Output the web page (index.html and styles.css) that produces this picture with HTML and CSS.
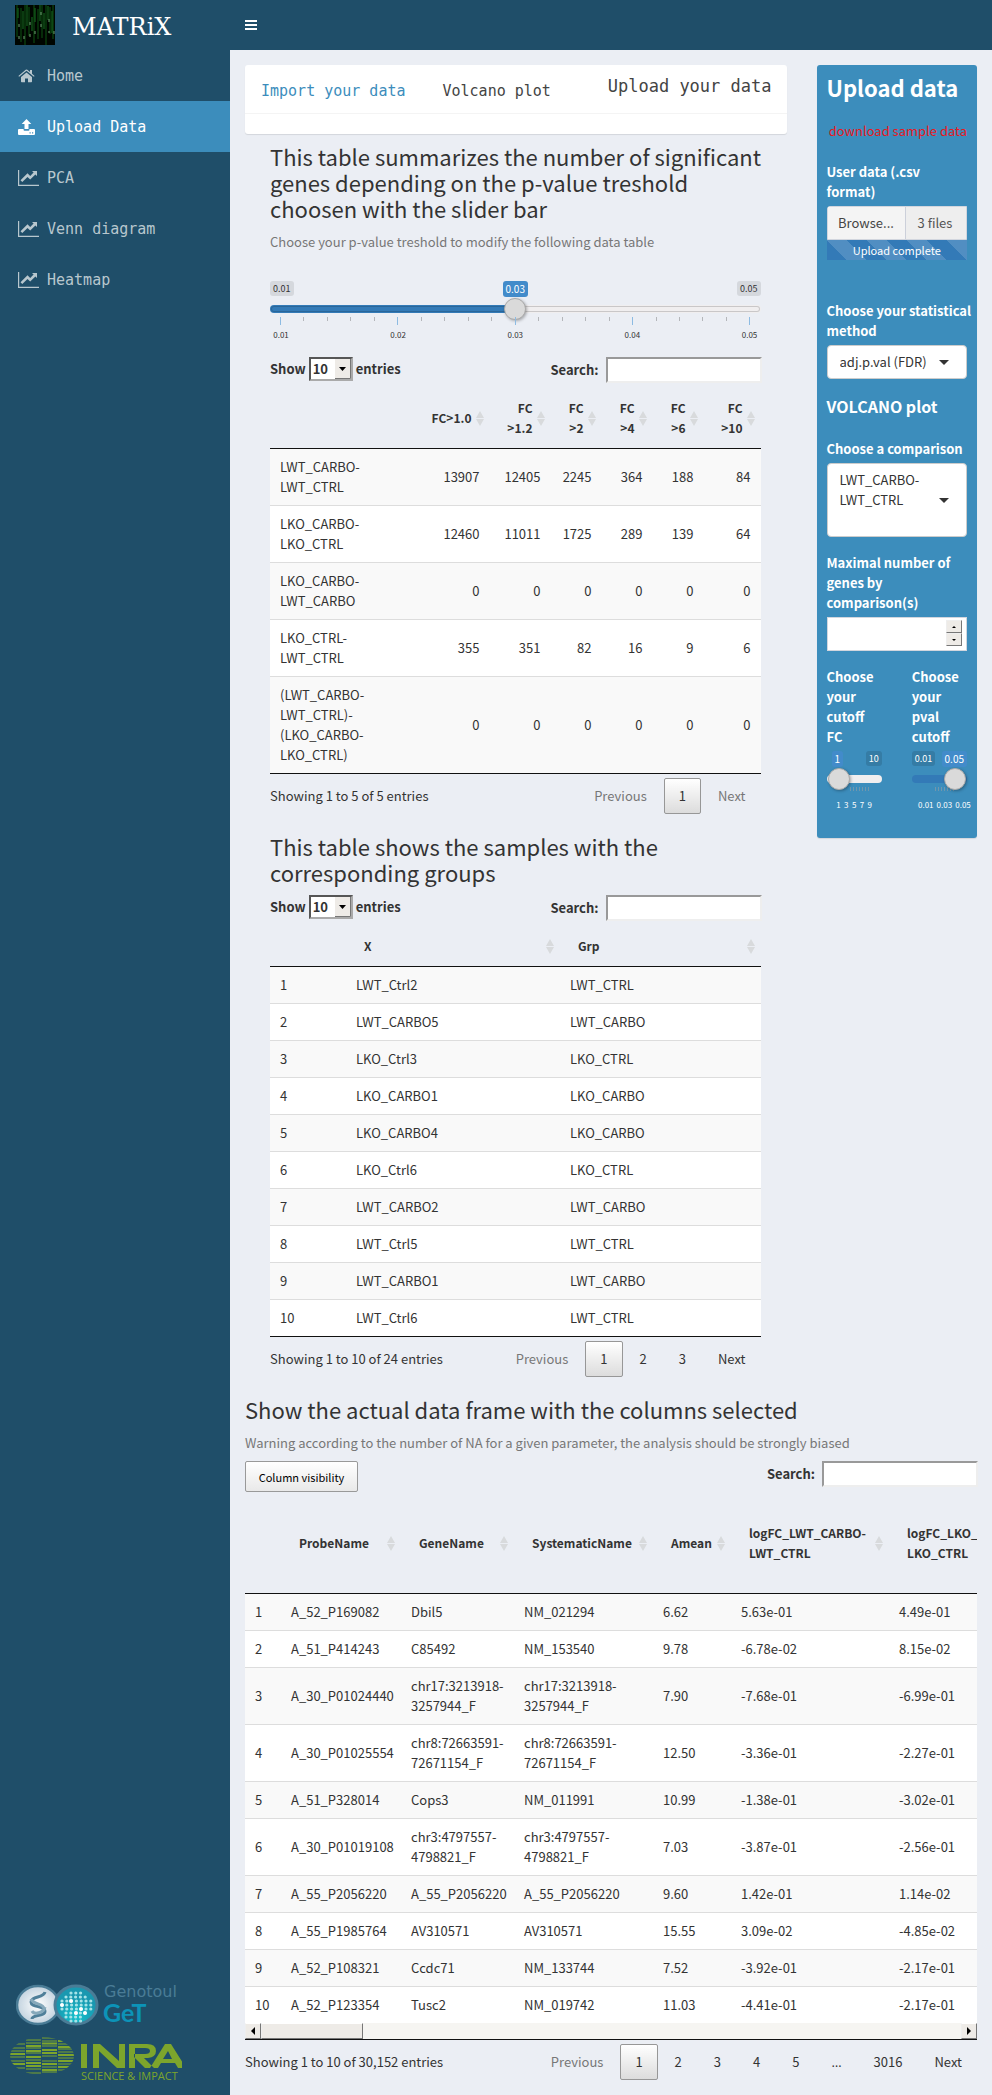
FILE: index.html
```html
<!DOCTYPE html>
<html lang="en">
<head>
<meta charset="utf-8">
<title>MATRiX</title>
<link rel="stylesheet" href="styles.css">
</head>
<body>
<svg width="0" height="0" class="defs" aria-hidden="true">
  <symbol id="i-home" viewBox="0 0 17 14"><path d="M8.500 3.400 14 8v4.600a.7.7 0 0 1-.7.700H10V9.500H7v3.800H3.700a.7.7 0 0 1-.7-.7V8z"/><path d="M12 1h2v3.700l2.600 2.200-.7.900L8.500 1.700 1.100 7.800l-.7-.9L7.700.8a1.300 1.300 0 0 1 1.600 0L12 3z"/></symbol>
  <symbol id="i-upload" viewBox="0 0 17 16"><path d="M8.500 0l4.800 5H10.500v5h-4V5H3.700z"/><path d="M1 10h4.600v1q0 .8.900.8h4q.9 0 .9-.8v-1H16q1 0 1 1v4q0 1-1 1H1q-1 0-1-1v-4q0-1 1-1zm10.500 3.300v1.200h1.200v-1.200zm2.500 0v1.200h1.200v-1.200z" fill-rule="evenodd"/></symbol>
  <symbol id="i-chart" viewBox="0 0 21 16"><path d="M0 0h1.200v14.800H21V16H0z"/><path d="M14 1h5v5l-1.600-1.600-5.200 5.200-2.700-2.700-5.200 5.200-1.800-1.800 7-7 2.700 2.700 3.400-3.400z"/></symbol>
</svg>
<aside class="sidebar">
  <div class="brand">
    <svg class="brand-logo" viewBox="0 0 40 40" aria-hidden="true">
      <rect width="40" height="40" fill="#000500"/>
      <g fill="none" stroke-width="1.300">
        <path stroke="#0a420e" d="M2 0v32M6 3v34M10 0v40M14 2v29M19 0v38M23 4v30M27 0v33M31 0v40M35 2v27M38 0v34"/>
        <path stroke="#125a1a" d="M3 3v10M8 6v18M12 0v21M17 12v14M20 3v14M25 0v16M29 8v16M33 1v14M37 6v22"/>
        <path stroke="#6f9f74" stroke-width="1" stroke-dasharray="3 9" d="M4 19v18M9 31v8M15 17v16M20 26v12M26 7v22M34 14v14M39 26v12"/>
      </g>
    </svg>
    <span class="brand-name">MATRiX</span>
  </div>
  <nav class="menu">
    <a href="#home"><svg width="17" height="14"><use href="#i-home"/></svg>Home</a>
    <a href="#upload" class="active"><svg width="17" height="16"><use href="#i-upload"/></svg>Upload Data</a>
    <a href="#pca"><svg width="21" height="16"><use href="#i-chart"/></svg>PCA</a>
    <a href="#venn"><svg width="21" height="16"><use href="#i-chart"/></svg>Venn diagram</a>
    <a href="#heatmap"><svg width="21" height="16"><use href="#i-chart"/></svg>Heatmap</a>
  </nav>
  <div class="partners">
    <svg class="genotoul" width="180" height="46" viewBox="0 0 180 46" role="img" aria-label="Genotoul GeT">
      <defs>
        <radialGradient id="gw"><stop offset="0" stop-color="#fff"/><stop offset="1" stop-color="#c3d3df"/></radialGradient>
        <radialGradient id="gt" cy=".8"><stop offset="0" stop-color="#12c0cc"/><stop offset="1" stop-color="#1a98b0"/></radialGradient>
      </defs>
      <ellipse cx="22" cy="21" rx="21" ry="19" fill="url(#gw)" stroke="#4a7c96" stroke-width="2.500"/>
      <ellipse cx="60" cy="21" rx="21" ry="19" fill="url(#gt)" stroke="#4a7c96" stroke-width="3"/>
      <g fill="none" stroke="#4f7f99" stroke-width="3"><path d="M29 8C28 14 15 12 15 18s14 3 14 9-13 3-13 8"/><path stroke="#86a9bb" d="M15 15c2 6 13 4 13 10M16 27c2 4 12 2 13-4"/></g>
      <g stroke="#a6e3e8" stroke-width="3.200" stroke-linecap="round" stroke-dasharray="0 4.800"><path d="M55 9h11M50 13h20M46 17h30M46 21h30M46 25h30M50 29h22M50 33h19M55 37h11"/></g>
      <g fill="#fff"><circle cx="55" cy="17" r="2"/><circle cx="46" cy="21" r="2"/><circle cx="65" cy="25" r="2"/><circle cx="60" cy="29" r="2"/><circle cx="69" cy="29" r="2"/></g>
      <text x="88" y="13" class="geno">Genotoul</text>
      <text x="87" y="38" class="get">GeT</text>
    </svg>
    <svg class="inra" width="172" height="48" viewBox="0 0 172 48" role="img" aria-label="INRA Science &amp; Impact">
      <defs><clipPath id="globe"><ellipse cx="32" cy="20" rx="32" ry="19"/></clipPath></defs>
      <g clip-path="url(#globe)" stroke="#7da52c" fill="none">
        <path stroke-width="1" d="M0 8h15M0 12h15M0 15h15M0 21h15M0 25h15M0 32h15M16 4h15M16 7h15M16 12h15M16 17h15M16 24h15M16 33h15M16 37h15M32 2h15M32 5h15M32 10h15M32 20h15M32 25h15M32 31h15M32 36h15M48 8h16M48 13h16M48 16h16M48 22h16M48 28h16M48 34h16"/>
        <path stroke-width="2" d="M0 18h15M0 28h15M16 10h15M16 15h15M16 21h15M16 27h15M16 30h15M32 7.500h15M32 14h15M32 17h15M32 28h15M32 34h15M48 5h16M48 11h16M48 19h16M48 25h16M48 31h16"/>
      </g>
      <g fill="#7da52c"><path d="M71 8h6v24h-6zM83 32V8h7l19 17V8h6v24h-8L89 15v17z"/><path fill-rule="evenodd" d="M119 32V8h18q9 0 9 7 0 6-8 7h-4l10 10h-9l-11-11v-3h11q5 0 5-3t-5-3h-10v20zM140 32 155 8h6l15 24h-8l-3-5h-14l-3 5zm13-9h9l-4-8z"/></g>
      <text x="71" y="44" class="science">SCIENCE &amp; IMPACT</text>
    </svg>
  </div>
</aside>

<div class="page">
  <header class="topbar"><button type="button" class="burger" aria-label="Toggle navigation"><svg width="12" height="10" viewBox="0 0 12 10"><path fill="#fff" d="M0 0h12v2H0zM0 4h12v2H0zM0 8h12v2H0z"/></svg></button></header>
  <main class="content">
    <div class="columns">
      <div class="col">
        <div class="tabbox">
          <div class="tabs">
            <a href="#import" class="on">Import your data</a>
            <a href="#volcano">Volcano plot</a>
            <span class="tabs-title">Upload your data</span>
          </div>
        </div>
        <section class="inner">
          <h3>This table summarizes the number of significant genes depending on the p-value treshold choosen with the slider bar</h3>
          <p class="help">Choose your p-value treshold to modify the following data table</p>
          <div class="slider">
            <div class="slider-labels"><span class="lim">0.01</span><span class="val">0.03</span><span class="lim">0.05</span></div>
            <input type="range" class="range half" aria-label="p-value treshold" min="0.01" max="0.05" step="0.001" value="0.03">
            <div class="ticks"><i class="big"></i><i></i><i></i><i></i><i></i><i class="big"></i><i></i><i></i><i></i><i></i><i class="big"></i><i></i><i></i><i></i><i></i><i class="big"></i><i></i><i></i><i></i><i></i><i class="big"></i></div>
            <div class="tick-text"><span>0.01</span><span>0.02</span><span>0.03</span><span>0.04</span><span>0.05</span></div>
          </div>
          <div class="controls">
            <label class="length">Show <select><option>10</option><option>25</option></select> entries</label>
            <label class="search">Search: <input type="search"></label>
          </div>
          <table class="t1">
            <colgroup><col><col class="w76"><col class="w61"><col class="w51"><col class="w51"><col class="w51"><col class="w57"></colgroup>
            <thead><tr><td></td><th>FC&gt;1.0</th><th>FC<br>&gt;1.2</th><th>FC<br>&gt;2</th><th>FC<br>&gt;4</th><th>FC<br>&gt;6</th><th>FC<br>&gt;10</th></tr></thead>
            <tbody>
              <tr><td>LWT_CARBO-<wbr>LWT_CTRL</td><td>13907</td><td>12405</td><td>2245</td><td>364</td><td>188</td><td>84</td></tr>
              <tr><td>LKO_CARBO-<wbr>LKO_CTRL</td><td>12460</td><td>11011</td><td>1725</td><td>289</td><td>139</td><td>64</td></tr>
              <tr><td>LKO_CARBO-<wbr>LWT_CARBO</td><td>0</td><td>0</td><td>0</td><td>0</td><td>0</td><td>0</td></tr>
              <tr><td>LKO_CTRL-<wbr>LWT_CTRL</td><td>355</td><td>351</td><td>82</td><td>16</td><td>9</td><td>6</td></tr>
              <tr><td>(LWT_CARBO-<wbr>LWT_CTRL)-<wbr>(LKO_CARBO-<wbr>LKO_CTRL)</td><td>0</td><td>0</td><td>0</td><td>0</td><td>0</td><td>0</td></tr>
            </tbody>
          </table>
          <div class="foot"><span>Showing 1 to 5 of 5 entries</span>
            <div class="pager"><button type="button" disabled>Previous</button><button type="button" class="cur">1</button><button type="button" disabled>Next</button></div></div>

          <h3>This table shows the samples with the corresponding groups</h3>
          <div class="controls">
            <label class="length">Show <select><option>10</option><option>25</option></select> entries</label>
            <label class="search">Search: <input type="search"></label>
          </div>
          <table class="t2">
            <colgroup><col class="w76"><col class="w214"><col></colgroup>
            <thead><tr><td></td><th>X</th><th>Grp</th></tr></thead>
            <tbody>
              <tr><td>1</td><td>LWT_Ctrl2</td><td>LWT_CTRL</td></tr>
              <tr><td>2</td><td>LWT_CARBO5</td><td>LWT_CARBO</td></tr>
              <tr><td>3</td><td>LKO_Ctrl3</td><td>LKO_CTRL</td></tr>
              <tr><td>4</td><td>LKO_CARBO1</td><td>LKO_CARBO</td></tr>
              <tr><td>5</td><td>LKO_CARBO4</td><td>LKO_CARBO</td></tr>
              <tr><td>6</td><td>LKO_Ctrl6</td><td>LKO_CTRL</td></tr>
              <tr><td>7</td><td>LWT_CARBO2</td><td>LWT_CARBO</td></tr>
              <tr><td>8</td><td>LWT_Ctrl5</td><td>LWT_CTRL</td></tr>
              <tr><td>9</td><td>LWT_CARBO1</td><td>LWT_CARBO</td></tr>
              <tr><td>10</td><td>LWT_Ctrl6</td><td>LWT_CTRL</td></tr>
            </tbody>
          </table>
          <div class="foot"><span>Showing 1 to 10 of 24 entries</span>
            <div class="pager"><button type="button" disabled>Previous</button><button type="button" class="cur">1</button><button type="button">2</button><button type="button">3</button><button type="button">Next</button></div></div>
        </section>
      </div>

      <div class="col">
        <form class="panel">
          <h2>Upload data</h2>
          <a href="#sample" class="sample">download sample data</a>
          <div class="field">
            <label for="file">User data (.csv format)</label>
            <div class="file"><button type="button" id="file">Browse...</button><span>3 files</span></div>
            <div class="progress">Upload complete</div>
          </div>
          <div class="field method">
            <label for="method">Choose your statistical method</label>
            <select id="method" class="pick"><option>adj.p.val (FDR)</option><option>p.val (raw)</option></select>
          </div>
          <h4>VOLCANO plot</h4>
          <div class="field">
            <label for="comp">Choose a comparison</label>
            <select id="comp" class="pick tall"><option>LWT_CARBO-LWT_CTRL</option></select>
          </div>
          <div class="field">
            <label for="maxg">Maximal number of genes by comparison(s)</label>
            <div class="number"><input type="number" id="maxg"><span class="spin"><button type="button" aria-label="Increase"><svg width="4" height="2" viewBox="0 0 4 2"><path d="M2 0l2 2H0z"/></svg></button><button type="button" aria-label="Decrease"><svg width="4" height="2" viewBox="0 0 4 2"><path d="M0 0h4L2 2z"/></svg></button></span></div>
          </div>
          <div class="cutoffs">
            <div class="field">
              <label for="fc">Choose your cutoff FC</label>
              <div class="slider mini">
                <div class="slider-labels"><span class="val first">1</span><span class="lim">10</span></div>
                <input type="range" id="fc" class="range none" min="1" max="10" value="1">
                <div class="ticks"></div>
                <div class="tick-text"><span>1</span><span>3</span><span>5</span><span>7</span><span>9</span></div>
              </div>
            </div>
            <div class="field">
              <label for="pv">Choose your pval cutoff</label>
              <div class="slider mini">
                <div class="slider-labels"><span class="lim">0.01</span><span class="val">0.05</span></div>
                <input type="range" id="pv" class="range full" min="0.01" max="0.05" step="0.01" value="0.05">
                <div class="ticks"></div>
                <div class="tick-text wide"><span>0.01</span><span>0.03</span><span>0.05</span></div>
              </div>
            </div>
          </div>
        </form>
      </div>
    </div>

    <h3>Show the actual data frame with the columns selected</h3>
    <p class="help">Warning according to the number of NA for a given parameter, the analysis should be strongly biased</p>
    <div class="controls frame-controls">
      <button type="button" class="colvis">Column visibility</button>
      <label class="search">Search: <input type="search"></label>
    </div>
    <div class="scroller">
      <table class="t3">
        <colgroup><col class="w36"><col class="w120"><col class="w113"><col class="w139"><col class="w78"><col class="w158"><col class="w158"></colgroup>
        <thead><tr><td></td><th>ProbeName</th><th>GeneName</th><th>SystematicName</th><th>Amean</th><th>logFC_LWT_CARBO-<br>LWT_CTRL</th><th>logFC_LKO_CARBO-<br>LKO_CTRL</th></tr></thead>
        <tbody>
          <tr><td>1</td><td>A_52_P169082</td><td>Dbil5</td><td>NM_021294</td><td>6.62</td><td>5.63e-01</td><td>4.49e-01</td></tr>
          <tr><td>2</td><td>A_51_P414243</td><td>C85492</td><td>NM_153540</td><td>9.78</td><td>-6.78e-02</td><td>8.15e-02</td></tr>
          <tr><td>3</td><td>A_30_P01024440</td><td>chr17:3213918-<wbr>3257944_F</td><td>chr17:3213918-<wbr>3257944_F</td><td>7.90</td><td>-7.68e-01</td><td>-6.99e-01</td></tr>
          <tr><td>4</td><td>A_30_P01025554</td><td>chr8:72663591-<wbr>72671154_F</td><td>chr8:72663591-<wbr>72671154_F</td><td>12.50</td><td>-3.36e-01</td><td>-2.27e-01</td></tr>
          <tr><td>5</td><td>A_51_P328014</td><td>Cops3</td><td>NM_011991</td><td>10.99</td><td>-1.38e-01</td><td>-3.02e-01</td></tr>
          <tr><td>6</td><td>A_30_P01019108</td><td>chr3:4797557-<wbr>4798821_F</td><td>chr3:4797557-<wbr>4798821_F</td><td>7.03</td><td>-3.87e-01</td><td>-2.56e-01</td></tr>
          <tr><td>7</td><td>A_55_P2056220</td><td>A_55_P2056220</td><td>A_55_P2056220</td><td>9.60</td><td>1.42e-01</td><td>1.14e-02</td></tr>
          <tr><td>8</td><td>A_55_P1985764</td><td>AV310571</td><td>AV310571</td><td>15.55</td><td>3.09e-02</td><td>-4.85e-02</td></tr>
          <tr><td>9</td><td>A_52_P108321</td><td>Ccdc71</td><td>NM_133744</td><td>7.52</td><td>-3.92e-01</td><td>-2.17e-01</td></tr>
          <tr><td>10</td><td>A_52_P123354</td><td>Tusc2</td><td>NM_019742</td><td>11.03</td><td>-4.41e-01</td><td>-2.17e-01</td></tr>
        </tbody>
      </table>
    </div>
    <div class="hbar"><button type="button" aria-label="Scroll left"><svg width="4" height="8" viewBox="0 0 4 8"><path d="M4 0v8L0 4z"/></svg></button><span class="thumb"></span><button type="button" class="end" aria-label="Scroll right"><svg width="4" height="8" viewBox="0 0 4 8"><path d="M0 0v8l4-4z"/></svg></button></div>
    <div class="foot"><span>Showing 1 to 10 of 30,152 entries</span>
      <div class="pager"><button type="button" disabled>Previous</button><button type="button" class="cur">1</button><button type="button">2</button><button type="button">3</button><button type="button">4</button><button type="button">5</button><span class="dots">…</span><button type="button">3016</button><button type="button">Next</button></div></div>
  </main>
</div>
</body>
</html>
```
FILE: styles.css
```css
* { box-sizing: border-box; }
body {
  margin: 0;
  display: grid;
  grid-template-columns: 230px minmax(0, 1fr);
  min-height: 100vh;
  background: #ebeef4;
  color: #333;
  font: 13px/20px "Noto Sans CJK SC", "Open Sans", sans-serif;
}
.defs { position: absolute; }
a { text-decoration: none; }
button, input, select { font: inherit; color: inherit; }
button { cursor: pointer; }

/* Sidebar */
.sidebar { display: flex; flex-direction: column; background: #1f4e69; }
.brand { display: flex; align-items: center; gap: 17px; height: 50px; padding-left: 15px; }
.brand-logo { width: 40px; height: 40px; }
.brand-name { color: #fff; font: 24px/30px "DejaVu Serif", serif; padding-top: 3px; }
.menu a {
  display: flex; align-items: center; height: 51px; padding-left: 18px;
  color: #b8c7ce; font: 15px/20px "DejaVu Sans Mono", monospace;
}
.menu svg { fill: currentColor; margin-right: 8px; }
.menu svg[width="17"] { margin-right: 12px; }
.menu a.active { background: #3c8dbc; color: #fff; }
.partners { margin-top: auto; padding: 0 0 11px 10px; display: flex; flex-direction: column; gap: 6px; }
.genotoul { margin-left: 6px; }
.geno { font: 16px "DejaVu Sans", sans-serif; fill: #4a7c96; }
.get { font: bold 25px Lato, sans-serif; fill: #0c93b8; }
.science { font: 11px "Open Sans", sans-serif; fill: #7da52c; }

/* Top bar */
.topbar { height: 50px; background: #1f4e69; display: flex; align-items: center; padding-left: 15px; }
.burger { display: flex; border: 0; background: none; padding: 0; }
.content { padding: 15px; }
.columns { display: grid; grid-template-columns: 3fr 1fr; margin: 0 -15px; }
.col { padding: 0 15px; min-width: 0; }

/* Tabs */
.tabbox { background: #fff; border-radius: 3px; box-shadow: 0 1px 1px rgba(0, 0, 0, .1); padding-bottom: 20px; }
.tabs {
  display: flex; align-items: center; gap: 37px; height: 49px; padding: 4px 15px 0 16px;
  border-bottom: 1px solid #f4f4f4; font: 15px/20px "DejaVu Sans Mono", monospace;
}
.tabs a { color: #444; }
.tabs a.on { color: #3c8dbc; }
.tabs-title { margin: 0 0 10px auto; font-size: 17px; color: #444; white-space: nowrap; }
.inner { padding: 0 26px 0 25px; }

h3 { margin: 9px -10px 10px 0; font-size: 22px; line-height: 26px; font-weight: 400; }
.help { margin: 0; padding: 1px 0; color: #777; }

/* Sliders */
.slider { margin-top: 28px; height: 76px; }
.slider-labels { display: flex; justify-content: space-between; align-items: flex-start; height: 17px; font-size: 9px; line-height: 15px; }
.slider-labels span { padding: 0 3px; border-radius: 3px; }
.lim { background: #d5d8dd; }
.val { background: #428bca; color: #fff; font-size: 10px; line-height: 16px; }
.range { display: block; width: 100%; height: 22px; margin: 0; appearance: none; background: none; }
.range::-webkit-slider-runnable-track {
  height: 8px; border-radius: 8px; border: 1px solid #c8c8cc;
  background: #f0eeef;
}
.range::-webkit-slider-thumb {
  appearance: none; width: 22px; height: 22px; margin-top: -8px; border-radius: 50%;
  background: #dadada; border: 1px solid #aaa; box-shadow: 1px 1px 3px rgba(0, 0, 0, .3);
}
.range.half::-webkit-slider-runnable-track { background: linear-gradient(90deg, #337ab7 50%, #f0eeef 50%) border-box; border-color: transparent; box-shadow: inset 0 0 0 1px rgba(0, 0, 0, .16); }
.range.full::-webkit-slider-runnable-track { background: #337ab7; border-color: #337ab7; }
.ticks { display: flex; justify-content: space-between; height: 8px; margin-top: -3px; padding: 0 10px; }
.ticks i { width: 1px; height: 4px; background: #b4b6ba; }
.ticks .big { height: 8px; background: #8dbbe2; }
.tick-text { display: flex; justify-content: space-between; padding: 0 11px; font-size: 8px; line-height: 20px; }
.tick-text span { width: 0; display: flex; justify-content: center; }

/* Table controls */
.controls { display: flex; justify-content: space-between; align-items: flex-start; font-weight: 700; height: 31px; }
.length { display: flex; align-items: center; gap: 3px; height: 24px; }
.length select {
  width: 44px; height: 24px; padding: 0 0 0 2px; border: 2px inset #aaa; border-radius: 0; appearance: none; font-weight: 700;
  background: #fff url("data:image/svg+xml,%3Csvg xmlns='http://www.w3.org/2000/svg' width='16' height='20'%3E%3Cpath fill='%23eeebe7' d='M0 0h16v20H0z'/%3E%3Cpath fill='none' stroke='%23777' d='M0 19.500h15.500V0'/%3E%3Cpath d='M4 8h7l-3.500 4z'/%3E%3C/svg%3E") no-repeat right center;
}
.search { display: flex; align-items: center; gap: 7px; height: 26px; margin-right: -1px; }
.search input { width: 156px; height: 26px; border: 2px solid; border-color: #999 #eee #eee #999; background: #fff; padding: 1px; border-radius: 0; }

/* Tables */
table { width: 100%; table-layout: fixed; border-collapse: separate; border-spacing: 0; border-bottom: 1px solid #111; }
th, td { text-align: left; vertical-align: middle; }
td { padding: 8px 10px; border-top: 1px solid #ddd; }
tbody tr:first-child td { border-top: 0; }
tbody tr:nth-child(odd) { background: #f9f9f9; }
tbody tr:nth-child(even) { background: #fff; }
thead td, th { padding: 10px 18px; border: 0; border-bottom: 1px solid #111; }
th {
  font-size: 12px;
  white-space: nowrap;
  background: url("data:image/svg+xml,%3Csvg xmlns='http://www.w3.org/2000/svg' width='8' height='15'%3E%3Cpath fill='%23d8dadc' d='M4 0l4 7H0zM0 8h8l-4 7z'/%3E%3C/svg%3E") no-repeat right 6px center;
}
.t1 th { padding-left: 0; text-align: right; }
.t1 td:not(:first-child) { text-align: right; }
.t1 td:first-child { padding-right: 30px; }
.t3 { width: 802px; border-bottom: 0; }
.t3 th, .t3 thead td { padding-top: 30px; padding-bottom: 30px; }
.w36 { width: 36px; } .w51 { width: 51px; } .w57 { width: 57px; } .w61 { width: 61px; }
.w76 { width: 76px; } .w78 { width: 78px; } .w113 { width: 113px; } .w120 { width: 120px; }
.w139 { width: 139px; } .w158 { width: 158px; } .w214 { width: 214px; }

/* Footers and paging */
.foot { display: flex; justify-content: space-between; align-items: center; padding-top: 4px; margin-bottom: 19px; }
.foot:last-child { margin-bottom: 10px; }
.pager { display: flex; gap: 2px; }
.pager button, .pager span { min-width: 37px; height: 36px; padding: 0 14px; border: 1px solid transparent; background: none; border-radius: 2px; line-height: 34px; text-align: center; }
.pager .dots { font-family: "Open Sans", sans-serif; }
.pager button:disabled { color: #777; }
.pager .cur { border-color: #979797; background: linear-gradient(#fff, #dcdcdc); }

/* Side panel */
.panel { background: #3c8dbc; color: #fff; border-radius: 3px; padding: 10px 10px 20px; box-shadow: 0 1px 1px rgba(0, 0, 0, .1); }
.panel h2 { margin: 0 0 22px; font-size: 22px; line-height: 24px; white-space: nowrap; }
.sample { display: block; color: #e6191f; text-align: right; white-space: nowrap; margin-bottom: 21px; }
.field { margin-bottom: 16px; }
.field > label { display: block; font-weight: 700; margin-bottom: 4px; }
.method > label { margin-right: -8px; }
.file { display: flex; height: 34px; color: #555; border: 1px solid #d2d6de; border-radius: 3px 0 0 0; background: #eee; }
.file button { width: 78px; border: 0; border-right: 1px solid #ccd0da; background: #f4f4f4; color: #444; padding: 0; }
.file span { padding: 6px 12px; white-space: nowrap; }
.progress { height: 20px; font-size: 11px; text-align: center; background: #337ab7 linear-gradient(45deg, rgba(255, 255, 255, .15) 25%, transparent 25%, transparent 50%, rgba(255, 255, 255, .15) 50%, rgba(255, 255, 255, .15) 75%, transparent 75%) 0 0 / 40px 40px; }
.method { margin-top: 41px; margin-bottom: 17px; }
.pick {
  display: block; width: 100%; height: 34px; padding: 0 12px; border: 1px solid #ccc; border-radius: 4px; appearance: none; color: #333;
  background: #fff url("data:image/svg+xml,%3Csvg xmlns='http://www.w3.org/2000/svg' width='10' height='5'%3E%3Cpath fill='%23333' d='M0 0h10L5 5z'/%3E%3C/svg%3E") no-repeat right 17px center;
}
.pick.tall { height: 74px; white-space: normal; padding: 6px 40px 26px 12px; }
.panel h4 { margin: 0 0 23px; font-size: 16px; line-height: 20px; }
.number { display: flex; height: 34px; background: #fff; border: 1px solid #d2d6de; padding: 2px 4px; }
.number input { flex: 1; min-width: 0; border: 0; background: none; appearance: textfield; color: #555; outline: 0; }
.number input::-webkit-inner-spin-button { display: none; }
.spin { display: flex; flex-direction: column; width: 16px; }
.spin button { display: flex; align-items: center; justify-content: center; height: 13px; padding: 0; border: 1px solid; border-color: #eee #777 #777 #eee; background: #eeebe7; }
.cutoffs { display: grid; grid-template-columns: 1fr 1fr; gap: 30px; }
.cutoffs .field { margin: 0; }
.mini { margin-top: 0; height: 67px; }
.mini .lim { background: #357ca5; }
.mini .first { margin-left: 5px; }
.mini .ticks { height: 4px; margin: -3px 12px 0 23px; padding: 0; background: repeating-linear-gradient(90deg, #6f97ae 0 1px, transparent 1px 3px); }
.mini .tick-text { padding: 4px 12px 0; }
.mini .tick-text.wide { padding: 4px 4px 0 14px; }
.mini .range::-webkit-slider-runnable-track { border-color: transparent; }

/* Data frame */
.frame-controls { height: 32px; margin-top: 7px; }
.colvis { width: 113px; height: 31px; padding: 0; font-size: 11px; font-weight: 400; color: #000; border: 1px solid #999; border-radius: 2px; background: linear-gradient(#fff, #e9e9e9); }
.scroller { overflow: hidden; }
.hbar { display: flex; height: 17px; border-bottom: 1px solid #111; background: #f6f5f2; }
.hbar button, .thumb { display: flex; align-items: center; justify-content: center; width: 16px; height: 16px; padding: 0; background: #eeebe7; border: 1px solid; border-color: #fff #777 #777 #eee; }
.hbar .thumb { width: 102px; }
.hbar .end { margin-left: auto; }
.hbar + .foot { margin-bottom: 0; }
```
